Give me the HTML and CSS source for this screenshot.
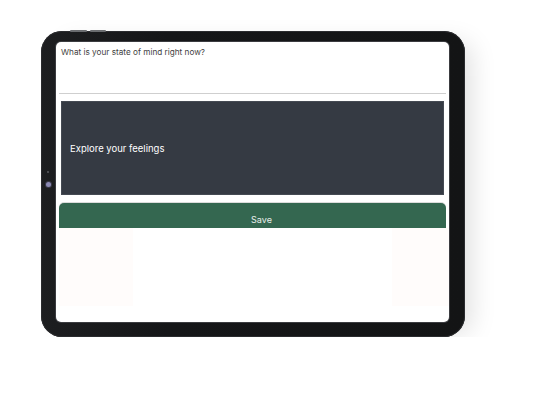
FILE: index.html
```html
<!DOCTYPE html>
<html lang="en">
<head>
<meta charset="utf-8">
<title>State of mind</title>
<link rel="stylesheet" href="styles.css">
</head>
<body>
<div class="stage">
  <div class="device">
    <span class="top-btn top-btn-a"></span>
    <span class="top-btn top-btn-b"></span>
    <span class="sensor"></span>
    <span class="camera"></span>
    <div class="screen">
      <div class="question">What is your state of mind right now?</div>
      <div class="explore">Explore your feelings</div>
      <button class="save">Save</button>
      <div class="below">
        <div class="ghost ghost-left"></div>
        <div class="ghost ghost-right"></div>
      </div>
    </div>
  </div>
</div>
</body>
</html>
```

FILE: styles.css
```css
html, body {
  margin: 0;
  padding: 0;
  background: #ffffff;
}

body {
  font-family: Inter, "Liberation Sans", Arial, sans-serif;
}

.stage {
  padding: 31px 0 0 41px;
}

.device {
  position: relative;
  box-sizing: border-box;
  width: 424px;
  height: 306px;
  padding: 11px 16px 15px 15px;
  border-radius: 21px;
  background: linear-gradient(90deg, #1d1e20 0%, #151618 30%, #131415 100%);
  box-shadow: 14px 4px 26px -8px rgba(0, 0, 0, 0.13), inset 0 0 0 1px #2a2b2e;
}

.top-btn {
  position: absolute;
  top: -1px;
  height: 2px;
  background: #6b6d70;
  border-radius: 1px;
}

.top-btn-a {
  left: 29px;
  width: 17px;
}

.top-btn-b {
  left: 49px;
  width: 16px;
}

.sensor {
  position: absolute;
  left: 6px;
  top: 140px;
  width: 2px;
  height: 2px;
  background: #4a4b50;
}

.camera {
  position: absolute;
  left: 5px;
  top: 151px;
  width: 5px;
  height: 5px;
  border-radius: 50%;
  background: #8b89b3;
  box-shadow: 0 0 0 1px #3a3a48;
}

.screen {
  box-sizing: border-box;
  width: 393px;
  height: 280px;
  background: #ffffff;
  border-radius: 5px;
  overflow: hidden;
  display: flex;
  flex-direction: column;
  padding: 0 3px;
  box-shadow: 0 0 0 1px #3b3c40;
}

.question {
  box-sizing: border-box;
  height: 52px;
  padding: 5px 2px 0;
  font-size: 8.2px;
  line-height: 10px;
  color: #3f3f42;
  border-bottom: 1px solid #cfcfcf;
}

.explore {
  box-sizing: border-box;
  margin: 7px 2px 0;
  height: 94px;
  padding: 0 8px;
  display: flex;
  align-items: center;
  background: #353a43;
  border: 1px solid #454a53;
  color: #ffffff;
  font-size: 9.5px;
}

.save {
  margin-top: 8px;
  height: 25px;
  padding: 8px 0 0 18px;
  border: none;
  border-radius: 5px 5px 0 0;
  background: #346750;
  color: #e9efec;
  font-family: inherit;
  font-size: 9px;
  line-height: 11px;
  text-align: center;
  flex-shrink: 0;
  box-shadow: 0 -1px 0 #dcdcdc;
}

.below {
  flex: 1;
  display: flex;
  justify-content: space-between;
  padding-bottom: 16px;
}

.ghost {
  background: #fffcfb;
}

.ghost-left {
  width: 74px;
}

.ghost-right {
  width: 57px;
  margin-right: -3px;
}
```
